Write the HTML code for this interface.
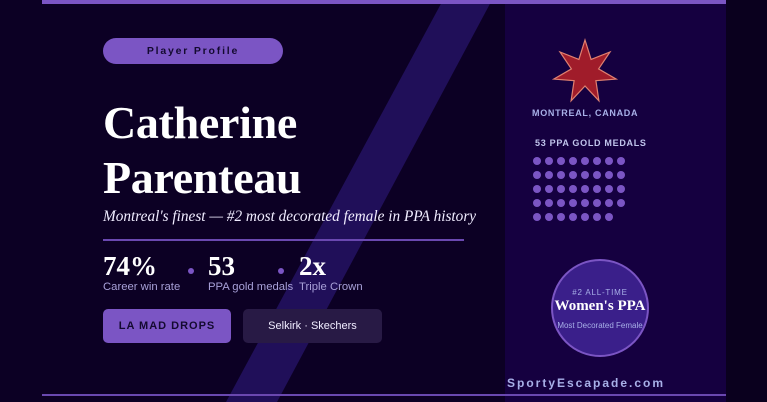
<!DOCTYPE html>
<html><head><style>
*{margin:0;padding:0;box-sizing:border-box}
body{width:767px;height:402px;background:#0c0024;position:relative;overflow:hidden;font-family:"Liberation Sans",sans-serif}
.a{position:absolute}
.serif{font-family:"Liberation Serif",serif}
</style></head><body>
<div class="a" style="left:726px;top:0;width:41px;height:402px;background:#0a001e"></div>
<div class="a" style="left:505px;top:0;width:221px;height:402px;background:#150040"></div>
<svg class="a" style="left:0;top:0" width="767" height="402"><polygon points="443,0 492,0 277,402 226,402" fill="#2a1670" fill-opacity="0.7"/></svg>
<div class="a" style="left:42px;top:0;width:684px;height:4px;background:#7b55c4"></div>
<div class="a" style="left:42px;top:394px;width:684px;height:2px;background:#6a48b0"></div>

<div class="a" style="left:103px;top:38px;width:180px;height:26px;border-radius:13px;background:#7b55c4;color:#140a30;font-size:10.5px;font-weight:bold;letter-spacing:1.8px;text-align:center;line-height:27px">Player Profile</div>
<div class="a serif" style="left:103px;top:95px;color:#fff;font-size:46px;font-weight:bold;line-height:55px;letter-spacing:-0.3px">Catherine<br>Parenteau</div>
<div class="a serif" style="left:103px;top:208px;color:#f0ecff;font-size:15.3px;font-style:italic">Montreal's finest — #2 most decorated female in PPA history</div>
<div class="a" style="left:103px;top:239px;width:361px;height:2px;background:#6a48b0"></div>

<div class="a serif" style="left:103px;top:251px;color:#fff;font-size:27px;font-weight:bold">74%</div>
<div class="a" style="left:103px;top:281px;color:#a8a0d8;font-size:11.3px">Career win rate</div>
<div class="a" style="left:188px;top:268px;width:6px;height:6px;border-radius:3px;background:#7b55c4"></div>
<div class="a serif" style="left:208px;top:251px;color:#fff;font-size:27px;font-weight:bold">53</div>
<div class="a" style="left:208px;top:281px;color:#a8a0d8;font-size:11.3px">PPA gold medals</div>
<div class="a" style="left:278px;top:268px;width:6px;height:6px;border-radius:3px;background:#7b55c4"></div>
<div class="a serif" style="left:299px;top:251px;color:#fff;font-size:27px;font-weight:bold">2x</div>
<div class="a" style="left:299px;top:281px;color:#a8a0d8;font-size:11.3px">Triple Crown</div>

<div class="a" style="left:103px;top:309px;width:128px;height:34px;border-radius:5px;background:#7b55c4;color:#140a30;font-size:11px;font-weight:bold;letter-spacing:1px;text-align:center;line-height:34px">LA MAD DROPS</div>
<div class="a" style="left:243px;top:309px;width:139px;height:34px;border-radius:5px;background:#281a45;color:#f0ecff;font-size:11px;text-align:center;line-height:34px">Selkirk · Skechers</div>

<svg class="a" style="left:0;top:0" width="767" height="402">
<polygon id="st" fill="#a01c2a" stroke="#e08070" stroke-width="1.2" points=""/>
<g id="dots" fill="#7b55c4"></g>
<circle cx="600" cy="308" r="48" fill="#3a1f8a" stroke="#7b55c4" stroke-width="2"/>
</svg>
<div class="a" style="left:532px;top:108px;color:#a8b0e8;font-size:9px;font-weight:bold;letter-spacing:0.7px">MONTREAL, CANADA</div>
<div class="a" style="left:535px;top:138px;color:#c0c4ec;font-size:9px;font-weight:bold;letter-spacing:0.7px">53 PPA GOLD MEDALS</div>
<div class="a" style="left:552px;top:288px;width:96px;text-align:center;color:#a8b0e8;font-size:8px;letter-spacing:0.8px">#2 ALL-TIME</div>
<div class="a serif" style="left:540px;top:298px;width:120px;text-align:center;color:#fff;font-size:15px;font-weight:bold">Women's PPA</div>
<div class="a" style="left:540px;top:321px;width:120px;text-align:center;color:#a8b0e8;font-size:8px">Most Decorated Female</div>
<div class="a" style="left:507px;top:376px;color:#a8b0e8;font-size:12px;font-weight:bold;letter-spacing:2px">SportyEscapade.com</div>
<script>
var p=[],cx=585,cy=72;for(var i=0;i<14;i++){var r=i%2?14:32,a=-Math.PI/2+i*Math.PI/7;p.push((cx+r*Math.cos(a)).toFixed(1)+","+(cy+r*Math.sin(a)).toFixed(1));}
document.getElementById('st').setAttribute('points',p.join(' '));
var g=document.getElementById('dots'),s='';for(var r=0;r<5;r++)for(var c=0;c<(r<4?8:7);c++)s+='<circle cx="'+(537+c*12)+'" cy="'+(161+r*14)+'" r="4"/>';g.innerHTML=s;
</script>
</body></html>
